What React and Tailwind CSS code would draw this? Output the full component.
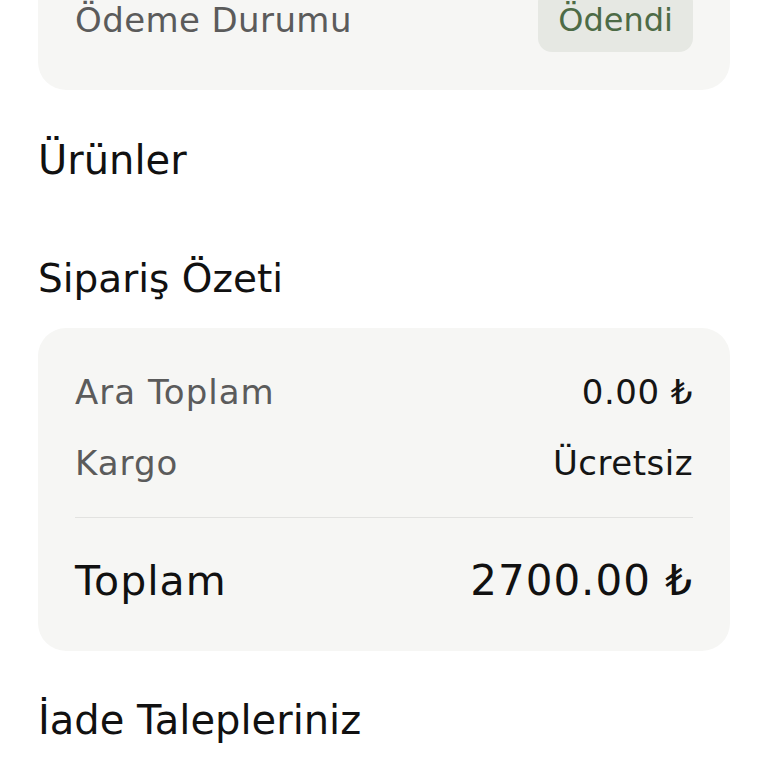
import React from 'react';

const font = { fontFamily: '"DejaVu Sans", "Noto Sans", sans-serif' };

const SummaryRow = ({ label, value }) => (
    <div className="flex items-center justify-between h-[40px] leading-[40px]">
        <span className="text-[34px] tracking-[1px] text-[#5b5b5b]">{label}</span>
        <span className="text-[34px] tracking-[0.5px] text-[#151515]">{value}</span>
    </div>
);

const App = () => {
    return (
        <div className="w-[768px] h-[768px] overflow-hidden bg-white px-[38px]" style={font}>
            {/* Payment card (top clipped) */}
            <div className="-mt-[40px] rounded-[28px] bg-[#f6f6f4] px-[37px] pt-[28px] pb-[38px]">
                <div className="flex items-center justify-between leading-[40px]">
                    <span className="text-[34px] tracking-[0.4px] text-[#5b5b5b]">Ödeme Durumu</span>
                    <span className="h-[64px] flex items-center px-[20px] rounded-[14px] bg-[#e6e8e3] text-[32px] text-[#4d6b46]">
                        Ödendi
                    </span>
                </div>
            </div>

            <h2 className="mt-[48px] h-[44px] leading-[44px] text-[40px] text-[#111]">Ürünler</h2>

            <h2 className="mt-[75px] h-[44px] leading-[44px] text-[39px] text-[#111]">Sipariş Özeti</h2>

            {/* Order summary */}
            <div className="mt-[27px] rounded-[28px] bg-[#f6f6f4] px-[37px] pt-[44px] pb-[46px]">
                <SummaryRow label="Ara Toplam" value="0.00 ₺" />
                <div className="mt-[31px]">
                    <SummaryRow label="Kargo" value="Ücretsiz" />
                </div>
                <div className="mt-[34px] h-px bg-[#e2e2e0]" />
                <div className="mt-[39px] flex items-center justify-between h-[48px] leading-[48px]">
                    <span className="text-[41px] tracking-[1px] text-[#111]">Toplam</span>
                    <span className="text-[42px] tracking-[1px] text-[#111]">2700.00 ₺</span>
                </div>
            </div>

            <h2 className="mt-[47px] h-[44px] leading-[44px] text-[40px] text-[#111]">İade Talepleriniz</h2>
        </div>
    );
};

export default App;
